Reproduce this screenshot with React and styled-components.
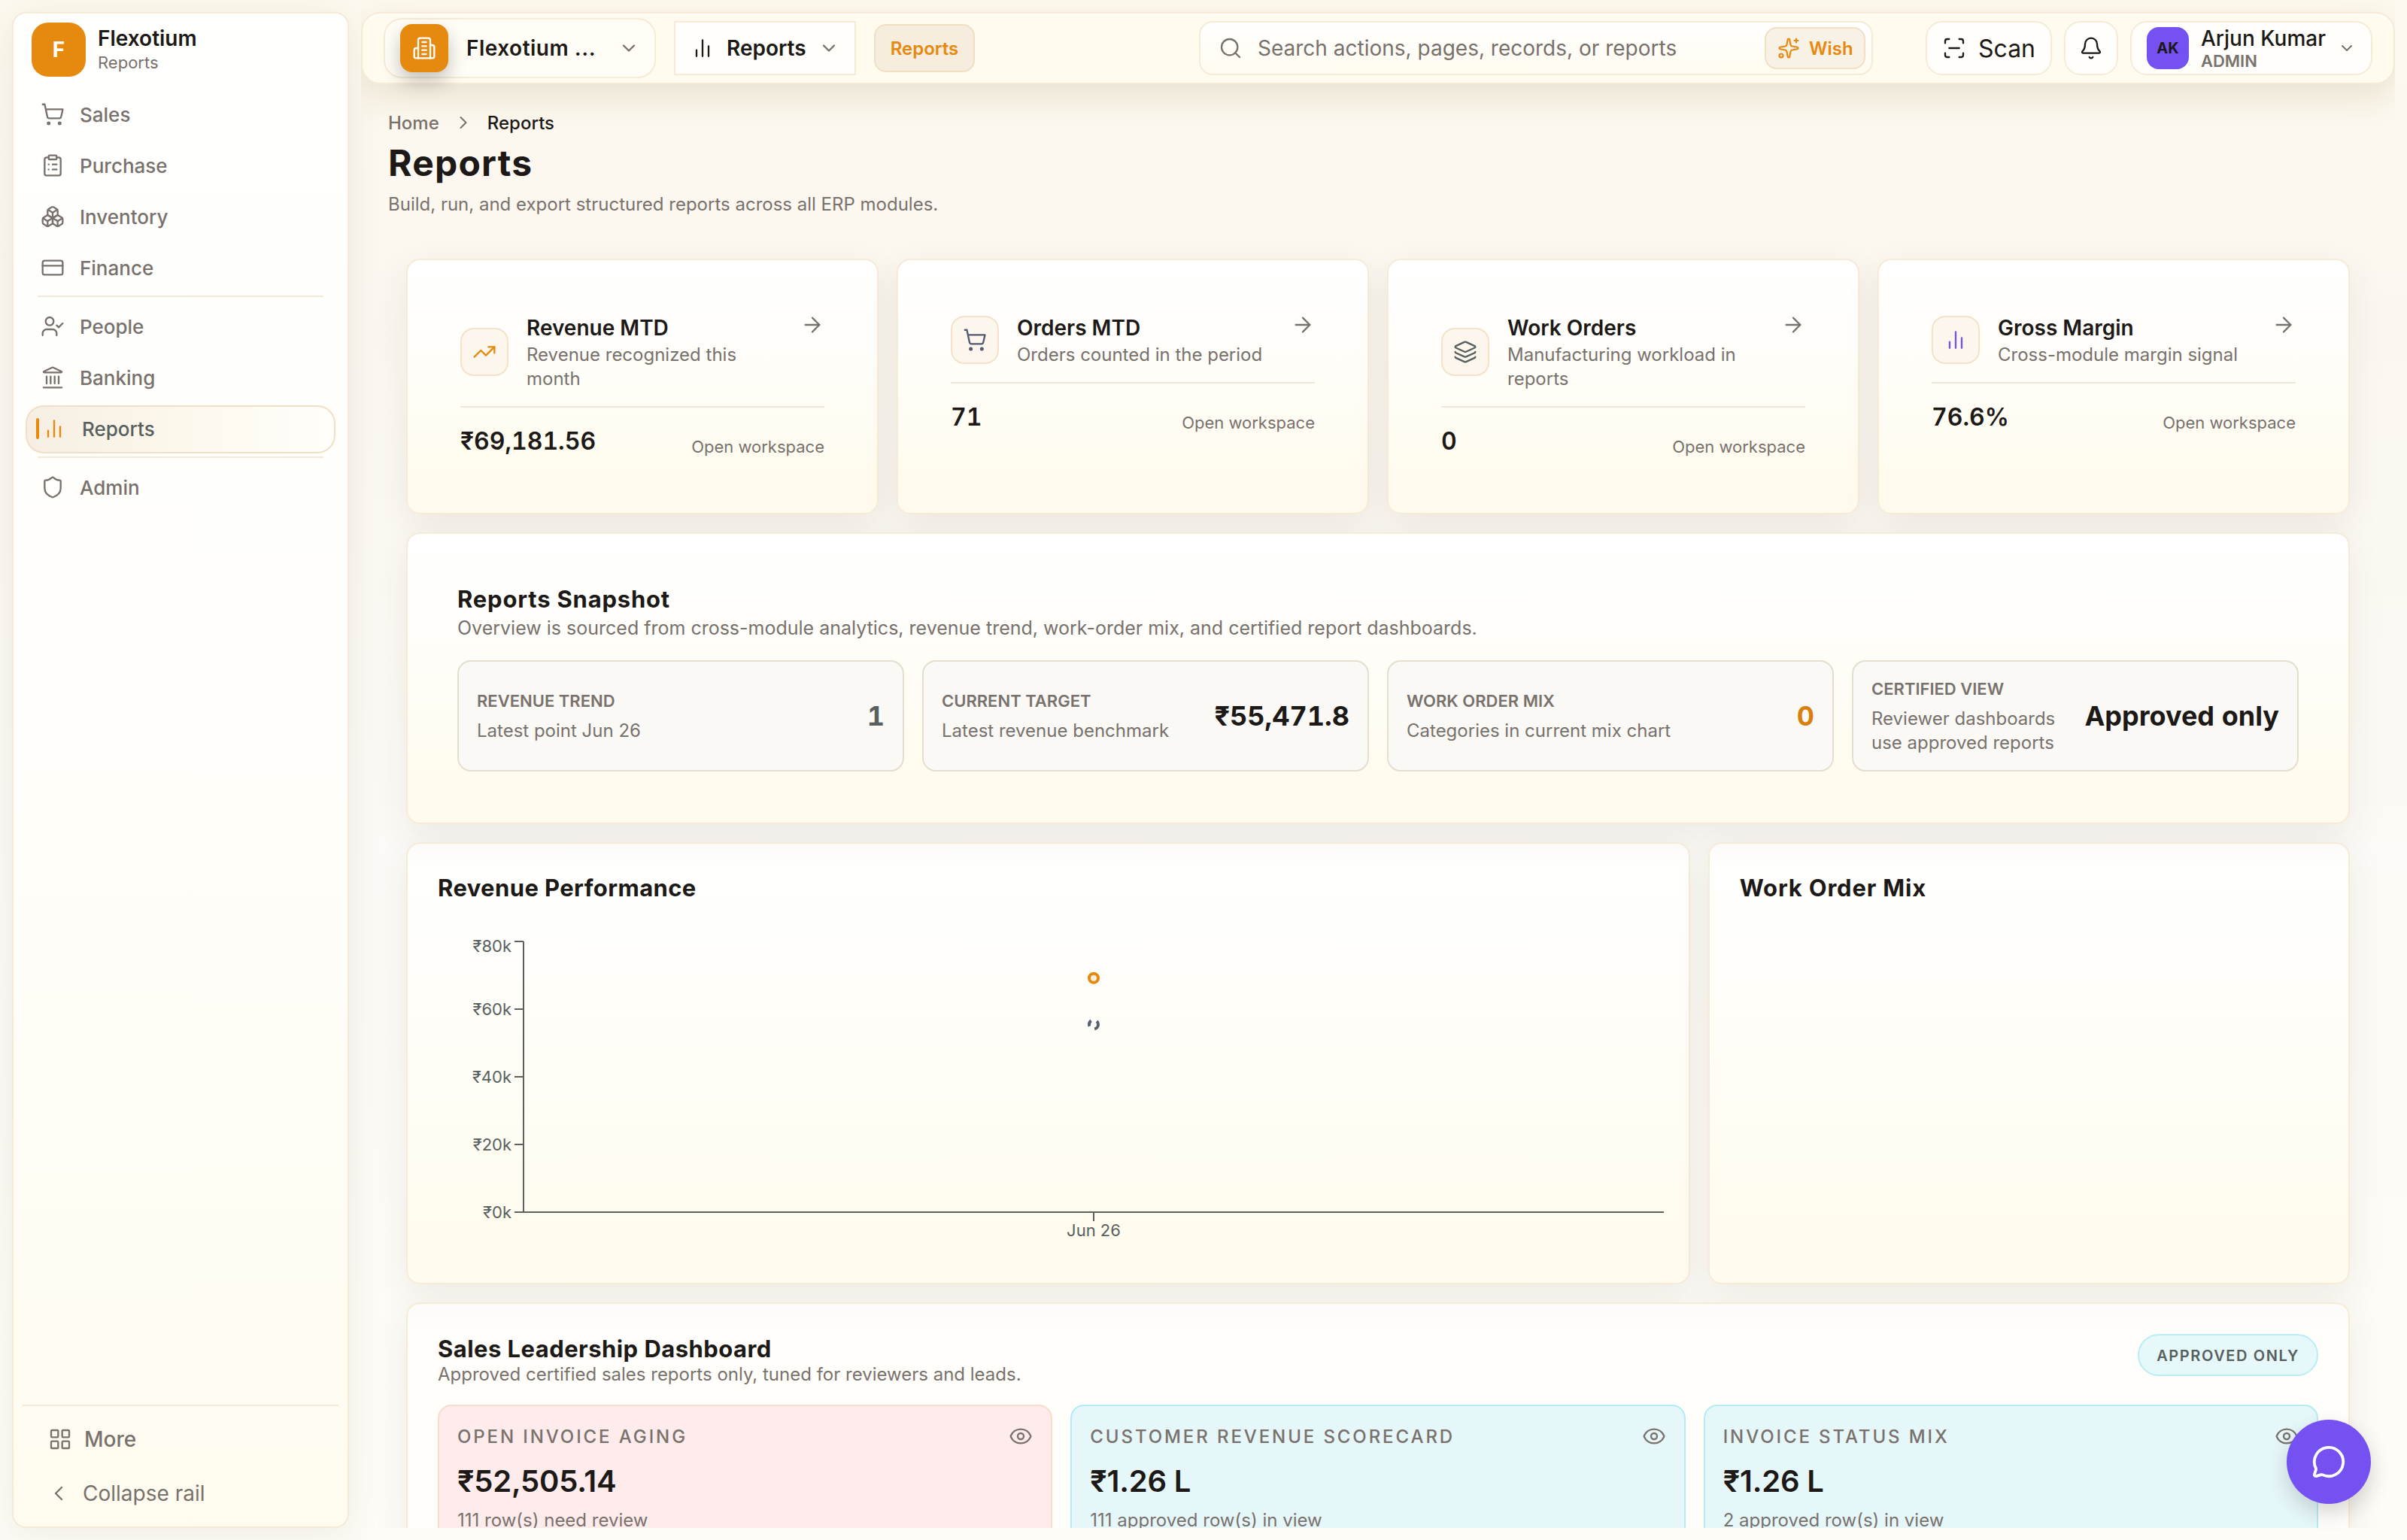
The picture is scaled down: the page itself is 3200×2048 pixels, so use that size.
import React from 'react';
import styled, { createGlobalStyle, css } from 'styled-components';
import {
  ArrowRight,
  Bell,
  Boxes,
  ChevronDown,
  ChevronLeft,
  ChevronRight,
  ClipboardList,
  CreditCard,
  Eye,
  Landmark,
  Layers,
  LayoutGrid,
  MessageCircle,
  ScanLine,
  Search,
  Shield,
  ShoppingCart,
  Sparkles,
  TrendingUp,
  UserCheck,
} from 'lucide-react';

const ink = '#1c1917';
const muted = '#78716c';
const slate = '#57605e';
const orange = '#e5890f';
const violet = '#7451f0';
const line = '#f5ead8';

const GlobalStyle = createGlobalStyle`
  * {
    box-sizing: border-box;
  }

  body {
    margin: 0;
    background: #fdfaf2;
    font-family: Inter, "Liberation Sans", sans-serif;
    color: ${ink};
  }

  svg {
    flex-shrink: 0;
  }
`;

const Page = styled.div`
  display: flex;
  gap: 16px;
  width: 3200px;
  height: 2048px;
  padding: 16px 16px 16px;
  overflow: hidden;
  background: linear-gradient(180deg, #fdf9ee 0%, #fbf7f0 22%, #fcfaf6 55%, #fefcf7 100%);
`;

/* ---------- sidebar ---------- */

const Sidebar = styled.aside`
  display: flex;
  flex-direction: column;
  width: 448px;
  flex-shrink: 0;
  border: 2px solid ${line};
  border-radius: 18px;
  background: linear-gradient(180deg, #fffffe 0%, #fffefa 50%, #fffbef 100%);
  box-shadow: 0 8px 48px rgba(87, 68, 30, 0.09);
`;

const Brand = styled.div`
  display: flex;
  align-items: center;
  gap: 16px;
  padding: 12px 24px 0;
`;

const BrandLogo = styled.div`
  display: flex;
  align-items: center;
  justify-content: center;
  width: 72px;
  height: 72px;
  border-radius: 22px;
  background: ${orange};
  color: #fff;
  font-size: 28px;
  font-weight: 700;
`;

const BrandName = styled.div`
  font-size: 28px;
  line-height: 34px;
  font-weight: 600;
`;

const BrandSub = styled.div`
  font-size: 22px;
  line-height: 30px;
  padding-bottom: 1px;
  color: ${muted};
`;

const Nav = styled.nav`
  display: flex;
  flex-direction: column;
  gap: 4px;
  flex: 1;
  padding: 19px 16px 0;
`;

const NavItem = styled.a`
  display: flex;
  align-items: center;
  gap: 20px;
  height: 64px;
  padding: 0 20px 2px;
  border-radius: 24px;
  font-size: 26px;
  font-weight: 500;
  color: ${muted};

  ${props => props.$active && css`
    gap: 21px;
    padding-left: 12px;
    border: 2px solid #f3dfc4;
    background: linear-gradient(90deg, #f6eee2 0%, #fdf8ec 50%, #fffefb 100%);
    color: ${slate};

    svg {
      color: ${orange};
      margin-left: -17px;
    }
  `}
`;

const ActiveMark = styled.span`
  width: 4px;
  height: 28px;
  border-radius: 2px;
  background: ${orange};
`;

const NavDivider = styled.div`
  height: 2px;
  margin: 0 16px 4px;
  background: ${line};
`;

const SidebarFooter = styled.div`
  margin: 0 12px;
  padding: 8px 34px 8px;
  border-top: 2px solid ${line};
`;

const FooterLink = styled.a`
  display: flex;
  align-items: center;
  gap: ${props => props.$gap}px;
  height: 72px;
  margin-left: ${props => props.$shift}px;
  font-size: 28px;
  font-weight: ${props => props.$weight};
  color: ${muted};
`;

/* ---------- top bar ---------- */

const Main = styled.main`
  display: flex;
  flex-direction: column;
  width: 2704px;
  height: 2032px;
  margin-top: -16px;
  padding-top: 16px;
  overflow: hidden;
`;

const Topbar = styled.header`
  display: flex;
  align-items: center;
  height: 96px;
  flex-shrink: 0;
  padding: 0 28px;
  border: 2px solid #f5ebd6;
  border-radius: 26px;
  background: #fffbef;
  box-shadow: inset 0 2px 0 #fffefa, 0 16px 48px rgba(120, 92, 35, 0.15);
`;

const CompanySwitch = styled.button`
  display: flex;
  align-items: center;
  width: 362px;
  height: 80px;
  padding: 0 20px;
  border: 2px solid #f5ebd6;
  border-radius: 24px;
  background: #fffdf5;
  font: 600 28px Inter, sans-serif;
  letter-spacing: 0.5px;
  color: ${ink};

  > svg {
    margin-left: auto;
    color: ${muted};
  }
`;

const CompanyIcon = styled.span`
  display: flex;
  align-items: center;
  justify-content: center;
  width: 64px;
  height: 64px;
  margin-right: 24px;
  border-radius: 16px;
  background: ${orange};
  color: #fff;
  box-shadow: 0 12px 24px rgba(28, 25, 23, 0.26);
`;

const ModuleSwitch = styled.button`
  display: flex;
  align-items: center;
  gap: 16px;
  width: 242px;
  height: 72px;
  margin-left: 24px;
  padding: 0 20px;
  border: 2px solid #f5ebd6;
  background: #fffefa;
  font: 600 28px Inter, sans-serif;
  color: ${ink};

  svg:last-child {
    color: ${muted};
  }
`;

const ModulePill = styled.span`
  display: flex;
  align-items: center;
  justify-content: center;
  width: 134px;
  height: 64px;
  margin-left: 24px;
  border: 2px solid #f1dfc2;
  border-radius: 16px;
  background: #f6edde;
  font-size: 24px;
  font-weight: 600;
  color: ${orange};
`;

const SearchBox = styled.div`
  display: flex;
  align-items: center;
  width: 896px;
  height: 72px;
  margin-left: auto;
  padding: 0 8px 0 24px;
  border: 2px solid #f5ebd6;
  border-radius: 18px;
  background: linear-gradient(180deg, #fff 0%, #fffbef 100%);
  color: ${muted};
`;

const SearchHint = styled.span`
  flex: 1;
  margin-left: 20px;
  font-size: 28px;
`;

const WishButton = styled.button`
  display: flex;
  align-items: center;
  gap: 12px;
  height: 56px;
  width: 134px;
  padding: 0 15px;
  border: 2px solid #f3dfc4;
  border-radius: 16px;
  background: #f8f1e6;
  font: 600 24px Inter, sans-serif;
  color: ${orange};
`;

const BarButton = styled.button`
  display: flex;
  align-items: center;
  justify-content: ${props => (props.$start ? 'flex-start' : 'center')};
  gap: 16px;
  width: ${props => props.$width}px;
  height: 72px;
  margin-left: ${props => props.$left || 16}px;
  padding: 0 20px;
  border: 2px solid #f5ebd6;
  border-radius: 22px;
  background: #fffefa;
  font: 400 32px Inter, sans-serif;
  color: ${ink};
`;

const Avatar = styled.span`
  display: flex;
  align-items: center;
  justify-content: center;
  width: 56px;
  height: 56px;
  border-radius: 16px;
  background: ${violet};
  font-size: 20px;
  font-weight: 700;
`;

const UserText = styled.span`
  flex: 1;
  text-align: left;
  font-size: 28px;
  font-weight: 500;
  line-height: 32px;
  white-space: nowrap;
`;

const UserRole = styled.span`
  display: block;
  margin-top: 1px;
  font-size: 22px;
  line-height: 26px;
  font-weight: 600;
  color: ${muted};
`;

/* ---------- page heading ---------- */

const Heading = styled.div`
  padding: 35px 36px 0;
  height: 232px;
  flex-shrink: 0;
`;

const Breadcrumb = styled.div`
  display: flex;
  align-items: center;
  height: 32px;
  gap: 18px;
  font-size: 24px;
  font-weight: 500;
  color: ${muted};

  b {
    font-weight: 500;
    color: ${ink};
  }
`;

const PageTitle = styled.h1`
  margin: 4px 0 0;
  font-size: 48px;
  line-height: 68px;
  font-weight: 700;
  letter-spacing: 1.2px;
`;

const PageLead = styled.p`
  margin: 5px 0 0;
  font-size: 24px;
  line-height: 32px;
  color: ${muted};
`;

/* ---------- cards ---------- */

const Content = styled.div`
  display: flex;
  flex-direction: column;
  gap: 24px;
  padding: 0 60px;
`;

const Card = styled.section`
  border: 2px solid #f6ebd7;
  border-radius: 18px;
  background: linear-gradient(180deg, #ffffff 0%, #fffefb 30%, #fffbee 85%, #fffaee 100%);
  box-shadow: 0 16px 48px rgba(60, 48, 30, 0.08);
`;

const MetricGrid = styled.div`
  display: grid;
  grid-template-columns: repeat(4, 1fr);
  gap: 24px;
`;

const MetricCard = styled(Card)`
  height: 340px;
  padding: 70px;
`;

const MetricTop = styled.div`
  display: grid;
  grid-template-columns: 64px 1fr 32px;
  align-items: center;
  column-gap: 24px;
  padding-bottom: 20px;
  border-bottom: 2px solid #eee6d8;
`;

const MetricIcon = styled.div`
  display: flex;
  align-items: center;
  justify-content: center;
  width: 64px;
  height: 64px;
  border: 2px solid #f4e2ca;
  border-radius: 18px;
  background: #fcf6ec;
  color: ${props => props.$color};
`;

const MetricName = styled.div`
  font-size: 28px;
  line-height: 40px;
  font-weight: 600;
`;

const MetricNote = styled.div`
  font-size: 24px;
  line-height: 32px;
  color: ${muted};
`;

const MetricArrow = styled(ArrowRight)`
  align-self: start;
  color: ${muted};
`;

const MetricBottom = styled.div`
  display: flex;
  align-items: flex-end;
  justify-content: space-between;
  padding-top: 20px;
`;

const MetricValue = styled.div`
  padding-top: 1px;
  font-size: 32px;
  line-height: 47px;
  font-weight: 600;
  font-variant-numeric: tabular-nums;
`;

const MetricLink = styled.a`
  font-size: 22px;
  line-height: 32px;
  color: ${muted};
`;

const SnapshotCard = styled(Card)`
  height: 388px;
  padding: 67px 66px;
`;

const CardTitle = styled.h2`
  margin: 0;
  font-size: 31px;
  line-height: 40px;
  font-weight: 700;
  letter-spacing: ${props => props.$spacing || 0}px;
`;

const CardLead = styled.p`
  margin: 0;
  font-size: ${props => props.$size || 24}px;
  line-height: ${props => props.$line || 36}px;
  color: ${muted};
`;

const SnapGrid = styled.div`
  display: grid;
  grid-template-columns: repeat(4, 1fr);
  gap: 24px;
  margin-top: 25px;
`;

const SnapTile = styled.div`
  display: flex;
  align-items: center;
  justify-content: space-between;
  gap: 24px;
  height: 148px;
  padding: 0 24px;
  border: 2px solid #e5ddcd;
  border-radius: 18px;
  background: #faf9f6;
`;

const SnapLabel = styled.div`
  margin-bottom: 8px;
  font-size: 22px;
  line-height: 32px;
  font-weight: 600;
  color: ${muted};
`;

const SnapNote = styled.div`
  font-size: 24px;
  line-height: 32px;
  color: ${muted};
`;

const SnapValue = styled.div`
  font-size: 36px;
  font-weight: 700;
  font-variant-numeric: tabular-nums;
  white-space: nowrap;
  color: ${props => props.$color || ink};
`;

const ChartGrid = styled.div`
  display: grid;
  grid-template-columns: 2fr 1fr;
  gap: 24px;
`;

const ChartCard = styled(Card)`
  height: 588px;
  padding: 39px 40px;
  background: linear-gradient(180deg, #fbfaf8 0%, #fffffd 5%, #fffefa 30%, #fffbee 90%);
`;

const ChartSvg = styled.svg`
  display: block;
  margin-top: 31px;
  overflow: visible;

  text {
    font-family: Inter, sans-serif;
    font-size: 22px;
    fill: ${slate};
  }
`;

const SalesCard = styled(Card)`
  height: 520px;
  padding: 40px;
  background: linear-gradient(180deg, #fcfbf8 0%, #fffefa 8%, #fffefc 100%);
`;

const SalesHead = styled.div`
  display: flex;
  justify-content: space-between;
  align-items: flex-start;
  height: 94px;
`;

const ApprovedChip = styled.span`
  display: flex;
  align-items: center;
  justify-content: center;
  width: 240px;
  height: 56px;
  padding-top: 1px;
  border: 2px solid #b9edf6;
  border-radius: 28px;
  background: #e6f8fa;
  font-size: 20px;
  font-weight: 600;
  letter-spacing: 1.6px;
  color: ${slate};
`;

const SalesGrid = styled.div`
  display: grid;
  grid-template-columns: repeat(3, 1fr);
  gap: 24px;
`;

const SalesTile = styled.div`
  height: 340px;
  padding: 20px 24px;
  border: 2px solid ${props => (props.$alert ? '#f6dfc9' : '#b4ebf5')};
  border-radius: 18px;
  background: ${props => (props.$alert ? '#feebeb' : '#e6f7fa')};
`;

const SalesLabel = styled.div`
  display: flex;
  align-items: center;
  justify-content: space-between;
  height: 40px;
  font-size: 24px;
  font-weight: 500;
  letter-spacing: 2.9px;
  color: ${muted};
`;

const SalesValue = styled.div`
  margin-top: 12px;
  font-size: 40px;
  line-height: 56px;
  font-weight: 600;
  letter-spacing: -0.2px;
`;

const SalesNote = styled.div`
  margin-top: 6px;
  font-size: 24px;
  line-height: 36px;
  color: ${muted};
`;

const ChatButton = styled.button`
  position: fixed;
  left: 3040px;
  top: 1888px;
  display: flex;
  align-items: center;
  justify-content: center;
  width: 112px;
  height: 112px;
  border: 0;
  border-radius: 50%;
  background: ${violet};
  color: #fff;
  box-shadow: 0 12px 28px rgba(28, 25, 23, 0.18);
`;

const BarsIcon = ({ size = 32 }) => (
  <svg width={size} height={size} viewBox="0 0 24 24" fill="none" stroke="currentColor" strokeWidth="1.75" strokeLinecap="round">
    <path d="M18 20V10M12 20V4M6 20v-6" />
  </svg>
);

const BuildingIcon = () => (
  <svg width="32" height="32" viewBox="0 0 24 24" fill="none" stroke="currentColor" strokeWidth="1.75" strokeLinecap="round" strokeLinejoin="round">
    <path d="M6 22V4a2 2 0 0 1 2-2h8a2 2 0 0 1 2 2v18Z" />
    <path d="M6 12H4a2 2 0 0 0-2 2v6a2 2 0 0 0 2 2h2" />
    <path d="M18 9h2a2 2 0 0 1 2 2v9a2 2 0 0 1-2 2h-2" />
    <path d="M10 6h4M10 10h4M10 14h4M10 18h4" />
  </svg>
);

const navGroups = [
  [
    { name: 'Sales', icon: ShoppingCart },
    { name: 'Purchase', icon: ClipboardList },
    { name: 'Inventory', icon: Boxes },
    { name: 'Finance', icon: CreditCard },
  ],
  [
    { name: 'People', icon: UserCheck },
    { name: 'Banking', icon: Landmark },
    { name: 'Reports', icon: BarsIcon, active: true },
  ],
  [{ name: 'Admin', icon: Shield }],
];

const metrics = [
  { name: 'Revenue MTD', note: 'Revenue recognized this month', value: '₹69,181.56', icon: TrendingUp, color: orange },
  { name: 'Orders MTD', note: 'Orders counted in the period', value: '71', icon: ShoppingCart, color: '#565872' },
  { name: 'Work Orders', note: 'Manufacturing workload in reports', value: '0', icon: Layers, color: slate },
  { name: 'Gross Margin', note: 'Cross-module margin signal', value: '76.6%', icon: BarsIcon, color: violet },
];

const snapshot = [
  { label: 'REVENUE TREND', note: 'Latest point Jun 26', value: '1', color: slate },
  { label: 'CURRENT TARGET', note: 'Latest revenue benchmark', value: '₹55,471.8' },
  { label: 'WORK ORDER MIX', note: 'Categories in current mix chart', value: '0', color: '#d97f0c' },
  { label: 'CERTIFIED VIEW', note: 'Reviewer dashboards use approved reports', value: 'Approved only' },
];

const salesTiles = [
  { label: 'OPEN INVOICE AGING', value: '₹52,505.14', note: '111 row(s) need review', alert: true },
  { label: 'CUSTOMER REVENUE SCORECARD', value: '₹1.26 L', note: '111 approved row(s) in view' },
  { label: 'INVOICE STATUS MIX', value: '₹1.26 L', note: '2 approved row(s) in view' },
];

const ticks = [80, 60, 40, 20, 0];

function RevenueChart() {
  return (
    <ChartSvg width="1622" height="440" viewBox="0 0 1622 440">
      <g stroke="#5c615e" strokeWidth="2" fill="none">
        <path d="M114 20V380H1630" />
        {ticks.map((t, i) => (
          <path key={t} d={`M102 ${20 + i * 90}h12`} />
        ))}
        <path d="M872 380v12" />
      </g>
      {ticks.map((t, i) => (
        <text key={t} x="98" y={(i === 0 ? 26 : 20 + i * 90) + 8} textAnchor="end">₹{t}k</text>
      ))}
      <text x="872" y="412" textAnchor="middle">Jun 26</text>
      <circle cx="872" cy="68.7" r="6" fill="#f8f0e5" stroke={orange} strokeWidth="4" />
      <circle cx="872" cy="130.4" r="6" fill="#fffefa" stroke="#56616a" strokeWidth="4" strokeDasharray="8 8" />
    </ChartSvg>
  );
}

function App() {
  return (
    <Page>
      <GlobalStyle />
      <Sidebar>
        <Brand>
          <BrandLogo>F</BrandLogo>
          <div>
            <BrandName>Flexotium</BrandName>
            <BrandSub>Reports</BrandSub>
          </div>
        </Brand>
        <Nav>
          {navGroups.map((group, i) => (
            <React.Fragment key={i}>
              {i > 0 && <NavDivider />}
              {group.map(({ name, icon: Icon, active }) => (
                <NavItem key={name} $active={active}>
                  {active && <ActiveMark />}
                  <Icon size={32} strokeWidth={1.75} />
                  {name}
                </NavItem>
              ))}
            </React.Fragment>
          ))}
        </Nav>
        <SidebarFooter>
          <FooterLink $gap={16} $weight={500} $shift={0}>
            <LayoutGrid size={32} strokeWidth={1.75} />
            More
          </FooterLink>
          <FooterLink $gap={16} $weight={400} $shift={-2}>
            <ChevronLeft size={32} strokeWidth={1.75} />
            Collapse rail
          </FooterLink>
        </SidebarFooter>
      </Sidebar>

      <Main>
        <Topbar>
          <CompanySwitch>
            <CompanyIcon><BuildingIcon /></CompanyIcon>
            Flexotium ...
            <ChevronDown size={28} strokeWidth={2} />
          </CompanySwitch>
          <ModuleSwitch>
            <BarsIcon />
            Reports
            <ChevronDown size={28} strokeWidth={2} />
          </ModuleSwitch>
          <ModulePill>Reports</ModulePill>
          <SearchBox>
            <Search size={32} strokeWidth={1.75} />
            <SearchHint>Search actions, pages, records, or reports</SearchHint>
            <WishButton>
              <Sparkles size={30} strokeWidth={1.75} />
              Wish
            </WishButton>
          </SearchBox>
          <BarButton $width={168} $left={70}>
            <ScanLine size={32} strokeWidth={1.75} />
            Scan
          </BarButton>
          <BarButton $width={72}>
            <Bell size={32} strokeWidth={1.75} />
          </BarButton>
          <BarButton $width={322} $start>
            <Avatar>AK</Avatar>
            <UserText>
              Arjun Kumar
              <UserRole>ADMIN</UserRole>
            </UserText>
            <ChevronDown size={24} strokeWidth={2} color={muted} />
          </BarButton>
        </Topbar>

        <Heading>
          <Breadcrumb>
            Home
            <ChevronRight size={28} strokeWidth={1.75} />
            <b>Reports</b>
          </Breadcrumb>
          <PageTitle>Reports</PageTitle>
          <PageLead>Build, run, and export structured reports across all ERP modules.</PageLead>
        </Heading>

        <Content>
          <MetricGrid>
            {metrics.map(({ name, note, value, icon: Icon, color }) => (
              <MetricCard key={name}>
                <MetricTop>
                  <MetricIcon $color={color}><Icon size={32} strokeWidth={1.75} /></MetricIcon>
                  <div>
                    <MetricName>{name}</MetricName>
                    <MetricNote>{note}</MetricNote>
                  </div>
                  <MetricArrow size={32} strokeWidth={1.75} />
                </MetricTop>
                <MetricBottom>
                  <MetricValue>{value}</MetricValue>
                  <MetricLink>Open workspace</MetricLink>
                </MetricBottom>
              </MetricCard>
            ))}
          </MetricGrid>

          <SnapshotCard>
            <CardTitle $spacing={0.8}>Reports Snapshot</CardTitle>
            <CardLead $size={25}>
              Overview is sourced from cross-module analytics, revenue trend, work-order mix, and certified report dashboards.
            </CardLead>
            <SnapGrid>
              {snapshot.map(({ label, note, value, color }) => (
                <SnapTile key={label}>
                  <div>
                    <SnapLabel>{label}</SnapLabel>
                    <SnapNote>{note}</SnapNote>
                  </div>
                  <SnapValue $color={color}>{value}</SnapValue>
                </SnapTile>
              ))}
            </SnapGrid>
          </SnapshotCard>

          <ChartGrid>
            <ChartCard>
              <CardTitle $spacing={0.4}>Revenue Performance</CardTitle>
              <RevenueChart />
            </ChartCard>
            <ChartCard>
              <CardTitle $spacing={0.8}>Work Order Mix</CardTitle>
            </ChartCard>
          </ChartGrid>

          <SalesCard>
            <SalesHead>
              <div>
                <CardTitle $spacing={0.45}>Sales Leadership Dashboard</CardTitle>
                <CardLead $line={28}>Approved certified sales reports only, tuned for reviewers and leads.</CardLead>
              </div>
              <ApprovedChip>APPROVED ONLY</ApprovedChip>
            </SalesHead>
            <SalesGrid>
              {salesTiles.map(({ label, value, note, alert }) => (
                <SalesTile key={label} $alert={alert}>
                  <SalesLabel>
                    {label}
                    <Eye size={32} strokeWidth={1.75} />
                  </SalesLabel>
                  <SalesValue>{value}</SalesValue>
                  <SalesNote>{note}</SalesNote>
                </SalesTile>
              ))}
            </SalesGrid>
          </SalesCard>
        </Content>
      </Main>
      <ChatButton>
        <MessageCircle size={46} strokeWidth={2} />
      </ChatButton>
    </Page>
  );
}

export default App;
